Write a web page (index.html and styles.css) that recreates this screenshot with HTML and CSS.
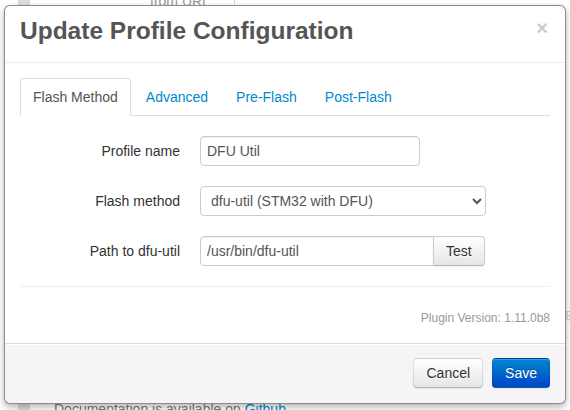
FILE: index.html
```html
<!DOCTYPE html>
<html>
<head>
<meta charset="utf-8">
<link rel="stylesheet" href="styles.css">
</head>
<body>
<div class="page">
  <div class="bg-top">
    <span class="bg-square"></span>
    <span class="bg-text">from URL</span>
    <span class="bg-vline"></span>
  </div>
  <div class="bg-side">⊟</div>
  <div class="bg-bottom">
    <span class="bg-square"></span>
    <span class="bg-text">Documentation is available on <span class="bg-link">Github</span></span>
  </div>
</div>

<div class="modal">
  <div class="modal-header">
    <h3>Update Profile Configuration</h3>
    <span class="close">×</span>
  </div>
  <div class="modal-body">
    <ul class="nav-tabs">
      <li class="active"><a>Flash Method</a></li>
      <li><a>Advanced</a></li>
      <li><a>Pre-Flash</a></li>
      <li><a>Post-Flash</a></li>
    </ul>
    <div class="form">
      <label class="control-label">Profile name</label>
      <div class="controls"><input class="input-name" type="text" value="DFU Util"></div>
      <label class="control-label">Flash method</label>
      <div class="controls">
        <select class="select-method"><option>dfu-util (STM32 with DFU)</option></select>
      </div>
      <label class="control-label">Path to dfu-util</label>
      <div class="controls input-append">
        <input class="input-path" type="text" value="/usr/bin/dfu-util"><button class="btn btn-append">Test</button>
      </div>
    </div>
    <hr class="sep">
    <div class="version">Plugin Version: 1.11.0b8</div>
  </div>
  <div class="modal-footer">
    <button class="btn">Cancel</button>
    <button class="btn btn-primary">Save</button>
  </div>
</div>
</body>
</html>
```
FILE: styles.css
```css
html, body {
  margin: 0;
  padding: 0;
  background: #fff;
}
body {
  font-family: "Liberation Sans", Arial, Helvetica, sans-serif;
  font-size: 14px;
  line-height: 20px;
  color: #333;
  width: 570px;
  height: 410px;
  overflow: hidden;
  position: relative;
}
.page {
  height: 410px;
}
.bg-top {
  display: flex;
  align-items: flex-end;
  height: 7px;
  overflow: hidden;
  padding-left: 18px;
}
.bg-top .bg-text {
  color: #999;
  margin-left: 120px;
  line-height: 14px;
  margin-bottom: -1px;
}
.bg-vline {
  width: 1px;
  height: 7px;
  background: #ddd;
  margin-left: 24px;
}
.bg-square {
  display: inline-block;
  width: 12px;
  height: 12px;
  background: #ddd;
}
.bg-side {
  text-align: right;
  color: #ccc;
  font-size: 14px;
  line-height: 20px;
  margin-right: -7px;
  margin-top: 298px;
}
.bg-bottom {
  display: flex;
  align-items: flex-start;
  height: 7px;
  overflow: hidden;
  padding-left: 18px;
  margin-top: 78px;
}
.bg-bottom .bg-square {
  height: 8px;
}
.bg-bottom .bg-text {
  margin-left: 24px;
  color: #777;
  line-height: 14px;
  margin-top: -1px;
}
.bg-link { color: #08c; }

.modal {
  position: absolute;
  left: 4px;
  top: 5px;
  width: 560px;
  background: #fff;
  border: 1px solid rgba(0,0,0,0.45);
  border-radius: 6px;
  box-shadow: 0 3px 7px rgba(0,0,0,0.3);
}
.modal-header {
  display: flex;
  justify-content: space-between;
  align-items: flex-start;
  padding: 6px 15px 12px;
  border-bottom: 1px solid #eee;
}
.modal-header h3 {
  margin: 0;
  font-size: 24.5px;
  line-height: 38px;
  font-weight: bold;
  color: #555;
}
.close {
  font-size: 20px;
  font-weight: bold;
  line-height: 20px;
  color: #000;
  opacity: 0.2;
  margin-top: 6px;
  margin-right: 2px;
}
.modal-body {
  padding: 15px;
}
.nav-tabs {
  list-style: none;
  margin: 0 0 20px;
  padding: 0;
  display: flex;
  border-bottom: 1px solid #ddd;
}
.nav-tabs li {
  margin-bottom: -1px;
}
.nav-tabs a {
  display: block;
  padding: 8px 12px;
  line-height: 20px;
  margin-right: 2px;
  border: 1px solid transparent;
  border-radius: 4px 4px 0 0;
  color: #08c;
}
.nav-tabs li.active a {
  color: #555;
  background: #fff;
  border-color: #ddd #ddd transparent;
}
.form {
  display: grid;
  grid-template-columns: 160px 1fr;
  column-gap: 20px;
  row-gap: 20px;
  align-items: start;
}
.control-label {
  text-align: right;
  padding-top: 5px;
  color: #333;
}
.controls {
  display: flex;
}
input, select, .btn {
  font-family: "Liberation Sans", Arial, Helvetica, sans-serif;
  font-size: 14px;
  line-height: 20px;
  box-sizing: border-box;
}
input {
  height: 30px;
  padding: 4px 6px;
  color: #555;
  border: 1px solid #ccc;
  border-radius: 4px;
  box-shadow: inset 0 1px 1px rgba(0,0,0,0.075);
  background: #fff;
  margin: 0;
}
.input-name { width: 220px; }
.select-method {
  width: 286px;
  height: 30px;
  padding: 4px 6px;
  color: #555;
  border: 1px solid #ccc;
  border-radius: 4px;
  background: #fff;
  margin: 0;
}
.input-path {
  width: 234px;
  border-radius: 4px 0 0 4px;
}
.btn {
  height: 30px;
  padding: 4px 12px;
  color: #333;
  text-shadow: 0 1px 1px rgba(255,255,255,0.75);
  background: linear-gradient(to bottom, #fff, #e6e6e6);
  border: 1px solid #ccc;
  border-color: rgba(0,0,0,0.1) rgba(0,0,0,0.1) rgba(0,0,0,0.25);
  border-bottom-color: #b3b3b3;
  border-radius: 4px;
  box-shadow: inset 0 1px 0 rgba(255,255,255,0.2), 0 1px 2px rgba(0,0,0,0.05);
  margin: 0;
}
.btn-append {
  margin-left: -1px;
  border-radius: 0 4px 4px 0;
  border-color: #ccc #ccc #b3b3b3;
}
.btn-primary {
  color: #fff;
  text-shadow: 0 -1px 0 rgba(0,0,0,0.25);
  background: linear-gradient(to bottom, #08c, #04c);
  border-color: rgba(0,0,0,0.1) rgba(0,0,0,0.1) rgba(0,0,0,0.25);
}
.sep {
  margin: 20px 0;
  border: 0;
  border-top: 1px solid #eee;
  border-bottom: 1px solid #fff;
}
.version {
  text-align: right;
  font-size: 12px;
  color: #999;
}
.modal-footer {
  display: flex;
  justify-content: flex-end;
  gap: 9px;
  padding: 14px 15px 15px;
  background: #f5f5f5;
  border-top: 1px solid #ddd;
  border-radius: 0 0 6px 6px;
  box-shadow: inset 0 1px 0 #fff;
}
```
